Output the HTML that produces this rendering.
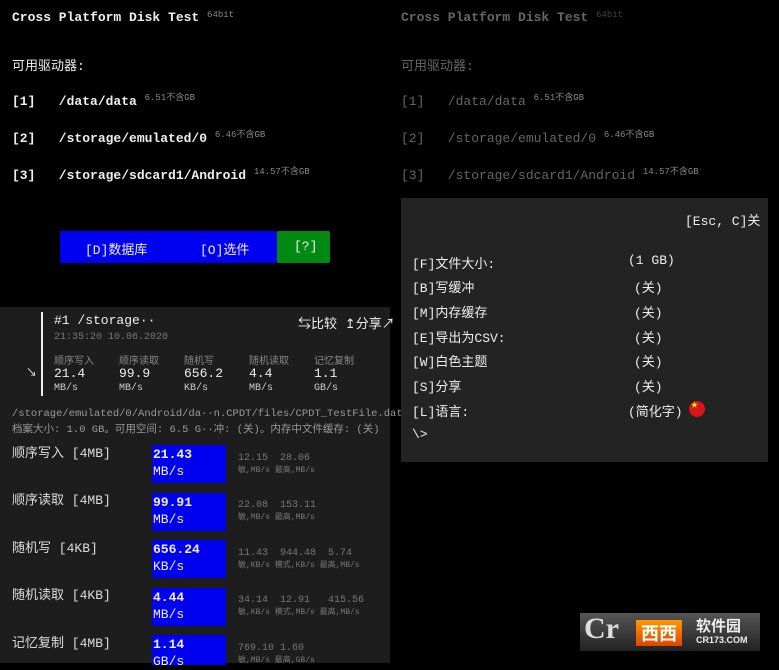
<!DOCTYPE html>
<html><head><meta charset="utf-8"><style>
*{margin:0;padding:0;box-sizing:border-box}
body{width:779px;height:663px;background:#000;position:relative;overflow:hidden;font-family:"Liberation Mono","Noto Sans CJK SC",monospace;color:#eee}
.a{position:absolute;white-space:nowrap}
.t{font-size:13px;font-weight:bold}
.s{font-size:9px;color:#888;font-weight:normal}
.m{font-size:13px}
.g{color:#888}
.d{color:#666}
.dm .a{color:#666!important}
</style></head><body>
<!-- left top -->
<div class="a t" style="left:12px;top:10px">Cross Platform Disk Test <span class="s" style="vertical-align:4px">64bit</span></div>
<div class="a m" style="left:12px;top:55px">可用驱动器:</div>
<div class="a t" style="left:12px;top:90px">[1]&nbsp;&nbsp;&nbsp;/data/data <span class="s" style="vertical-align:5px">6.51不含GB</span></div>
<div class="a t" style="left:12px;top:127px">[2]&nbsp;&nbsp;&nbsp;/storage/emulated/0 <span class="s" style="vertical-align:5px">6.46不含GB</span></div>
<div class="a t" style="left:12px;top:164px">[3]&nbsp;&nbsp;&nbsp;/storage/sdcard1/Android <span class="s" style="vertical-align:5px">14.57不含GB</span></div>
<div class="a" style="left:60px;top:231px;width:217px;height:32px;background:#0000f0"></div>
<div class="a" style="left:277px;top:231px;width:53px;height:32px;background:#008a12;border-radius:2px"></div>
<div class="a m" style="left:85px;top:239px">[D]数据库</div>
<div class="a m" style="left:200px;top:239px">[O]选件</div>
<div class="a m" style="left:294px;top:239px">[?]</div>
<!-- left bottom -->
<div class="a" style="left:0;top:307px;width:390px;height:356px;background:#1d1d1d"></div>
<div class="a" style="left:41px;top:312px;width:2px;height:84px;background:#eee"></div>
<div class="a m" style="left:54px;top:313px">#1 /storage··</div>
<div class="a m" style="left:298px;top:313px">⇆比较 ↥分享↗</div>
<div class="a" style="left:54px;top:332px;font-size:10px;color:#777">21:35:20 10.06.2020</div>
<div class="a" style="left:26px;top:364px;font-size:11px">↘</div>
<div class="a" style="left:54px;top:352px;font-size:10px;color:#888;word-spacing:0">顺序写入</div>
<div class="a" style="left:119px;top:352px;font-size:10px;color:#888">顺序读取</div>
<div class="a" style="left:184px;top:352px;font-size:10px;color:#888">随机写</div>
<div class="a" style="left:249px;top:352px;font-size:10px;color:#888">随机读取</div>
<div class="a" style="left:314px;top:352px;font-size:10px;color:#888">记忆复制</div>
<div class="a m" style="left:54px;top:366px">21.4</div><div class="a m" style="left:119px;top:366px">99.9</div><div class="a m" style="left:184px;top:366px">656.2</div><div class="a m" style="left:249px;top:366px">4.4</div><div class="a m" style="left:314px;top:366px">1.1</div>
<div class="a" style="left:54px;top:383px;font-size:10px;color:#ccc">MB/s</div><div class="a" style="left:119px;top:383px;font-size:10px;color:#ccc">MB/s</div><div class="a" style="left:184px;top:383px;font-size:10px;color:#ccc">KB/s</div><div class="a" style="left:249px;top:383px;font-size:10px;color:#ccc">MB/s</div><div class="a" style="left:314px;top:383px;font-size:10px;color:#ccc">GB/s</div>
<div class="a" style="left:12px;top:408px;font-size:10.5px;color:#999">/storage/emulated/0/Android/da··n.CPDT/files/CPDT_TestFile.dat</div>
<div class="a" style="left:12px;top:421px;font-size:10.5px;color:#999">档案大小: 1.0 GB。可用空间: 6.5 G··冲: (关)。内存中文件缓存: (关)</div>

<div class="a m" style="left:12px;top:442px;color:#ddd">顺序写入 [4MB]</div>
<div class="a m" style="left:12px;top:489px;color:#ddd">顺序读取 [4MB]</div>
<div class="a m" style="left:12px;top:537px;color:#ddd">随机写 [4KB]</div>
<div class="a m" style="left:12px;top:584px;color:#ddd">随机读取 [4KB]</div>
<div class="a m" style="left:12px;top:632px;color:#ddd">记忆复制 [4MB]</div>

<div class="a" style="left:152px;top:445px;width:74px;height:38px;background:#0000f0"></div>
<div class="a" style="left:152px;top:493px;width:74px;height:38px;background:#0000f0"></div>
<div class="a" style="left:152px;top:540px;width:74px;height:38px;background:#0000f0"></div>
<div class="a" style="left:152px;top:588px;width:74px;height:38px;background:#0000f0"></div>
<div class="a" style="left:152px;top:635px;width:74px;height:30px;background:#0000f0"></div>
<div class="a m" style="left:153px;top:446px;line-height:17px;font-weight:bold">21.43<br><span style="font-weight:normal">MB/s</span></div>
<div class="a m" style="left:153px;top:494px;line-height:17px;font-weight:bold">99.91<br><span style="font-weight:normal">MB/s</span></div>
<div class="a m" style="left:153px;top:541px;line-height:17px;font-weight:bold">656.24<br><span style="font-weight:normal">KB/s</span></div>
<div class="a m" style="left:153px;top:589px;line-height:17px;font-weight:bold">4.44<br><span style="font-weight:normal">MB/s</span></div>
<div class="a m" style="left:153px;top:636px;line-height:17px;font-weight:bold">1.14<br><span style="font-weight:normal">GB/s</span></div>

<div class="a" style="left:238px;top:453px;font-size:10px;color:#777;line-height:12px">12.15&nbsp;&nbsp;28.06<br><span style="font-size:8px">敏,MB/s 最高,MB/s</span></div>
<div class="a" style="left:238px;top:500px;font-size:10px;color:#777;line-height:12px">22.08&nbsp;&nbsp;153.11<br><span style="font-size:8px">敏,MB/s 最高,MB/s</span></div>
<div class="a" style="left:238px;top:548px;font-size:10px;color:#777;line-height:12px">11.43&nbsp;&nbsp;944.48&nbsp;&nbsp;5.74<br><span style="font-size:8px">敏,KB/s 模式,KB/s 最高,MB/s</span></div>
<div class="a" style="left:238px;top:595px;font-size:10px;color:#777;line-height:12px">34.14&nbsp;&nbsp;12.91&nbsp;&nbsp;&nbsp;415.56<br><span style="font-size:8px">敏,KB/s 模式,MB/s 最高,MB/s</span></div>
<div class="a" style="left:238px;top:643px;font-size:10px;color:#777;line-height:12px">769.10 1.60<br><span style="font-size:8px">敏,MB/s 最高,GB/s</span></div>

<!-- right dimmed -->
<div class="dm">
<div class="a t" style="left:401px;top:10px">Cross Platform Disk Test <span class="s" style="vertical-align:4px;color:#444!important">64bit</span></div>
<div class="a m" style="left:401px;top:55px">可用驱动器:</div>
<div class="a t" style="left:401px;top:90px;font-weight:normal">[1]&nbsp;&nbsp;&nbsp;/data/data <span class="s" style="vertical-align:5px">6.51不含GB</span></div>
<div class="a t" style="left:401px;top:127px;font-weight:normal">[2]&nbsp;&nbsp;&nbsp;/storage/emulated/0 <span class="s" style="vertical-align:5px">6.46不含GB</span></div>
<div class="a t" style="left:401px;top:164px;font-weight:normal">[3]&nbsp;&nbsp;&nbsp;/storage/sdcard1/Android <span class="s" style="vertical-align:5px">14.57不含GB</span></div>
</div>
<div class="a" style="left:401px;top:198px;width:367px;height:264px;background:#232323"></div>
<div class="a m" style="left:685px;top:210px">[Esc, C]关</div>
<div class="a m" style="left:412px;top:253px">[F]文件大小:</div><div class="a m" style="left:628px;top:253px">(1 GB)</div>
<div class="a m" style="left:412px;top:277px">[B]写缓冲</div><div class="a m" style="left:634px;top:277px">(关)</div>
<div class="a m" style="left:412px;top:302px">[M]内存缓存</div><div class="a m" style="left:634px;top:302px">(关)</div>
<div class="a m" style="left:412px;top:327px">[E]导出为CSV:</div><div class="a m" style="left:634px;top:327px">(关)</div>
<div class="a m" style="left:412px;top:351px">[W]白色主题</div><div class="a m" style="left:634px;top:351px">(关)</div>
<div class="a m" style="left:412px;top:376px">[S]分享</div><div class="a m" style="left:634px;top:376px">(关)</div>
<div class="a m" style="left:412px;top:401px">[L]语言:</div><div class="a m" style="left:628px;top:401px">(简化字)</div>
<div class="a" style="left:689px;top:401px;width:16px;height:16px;border-radius:50%;background:#d8141c;color:#ff0;font-size:7px;line-height:10px;padding-left:2px">★</div>
<div class="a m" style="left:412px;top:427px">\&gt;</div>
<!-- logo -->
<div class="a" style="left:580px;top:613px;width:180px;height:38px;background:linear-gradient(#555,#222)"></div>
<div class="a" style="left:584px;top:612px;font:bold 30px 'Liberation Serif',serif;color:#ddd">Cr</div>
<div class="a" style="left:636px;top:620px;width:46px;height:26px;background:linear-gradient(#f90,#d40);color:#fff;font:bold 18px 'Noto Sans CJK SC',sans-serif;line-height:26px;text-align:center">西西</div>
<div class="a" style="left:696px;top:615px;font:bold 15px 'Noto Sans CJK SC',sans-serif;color:#eee">软件园</div>
<div class="a" style="left:696px;top:635px;font:bold 9px 'Liberation Sans',sans-serif;color:#eee">CR173.COM</div>
</body></html>
